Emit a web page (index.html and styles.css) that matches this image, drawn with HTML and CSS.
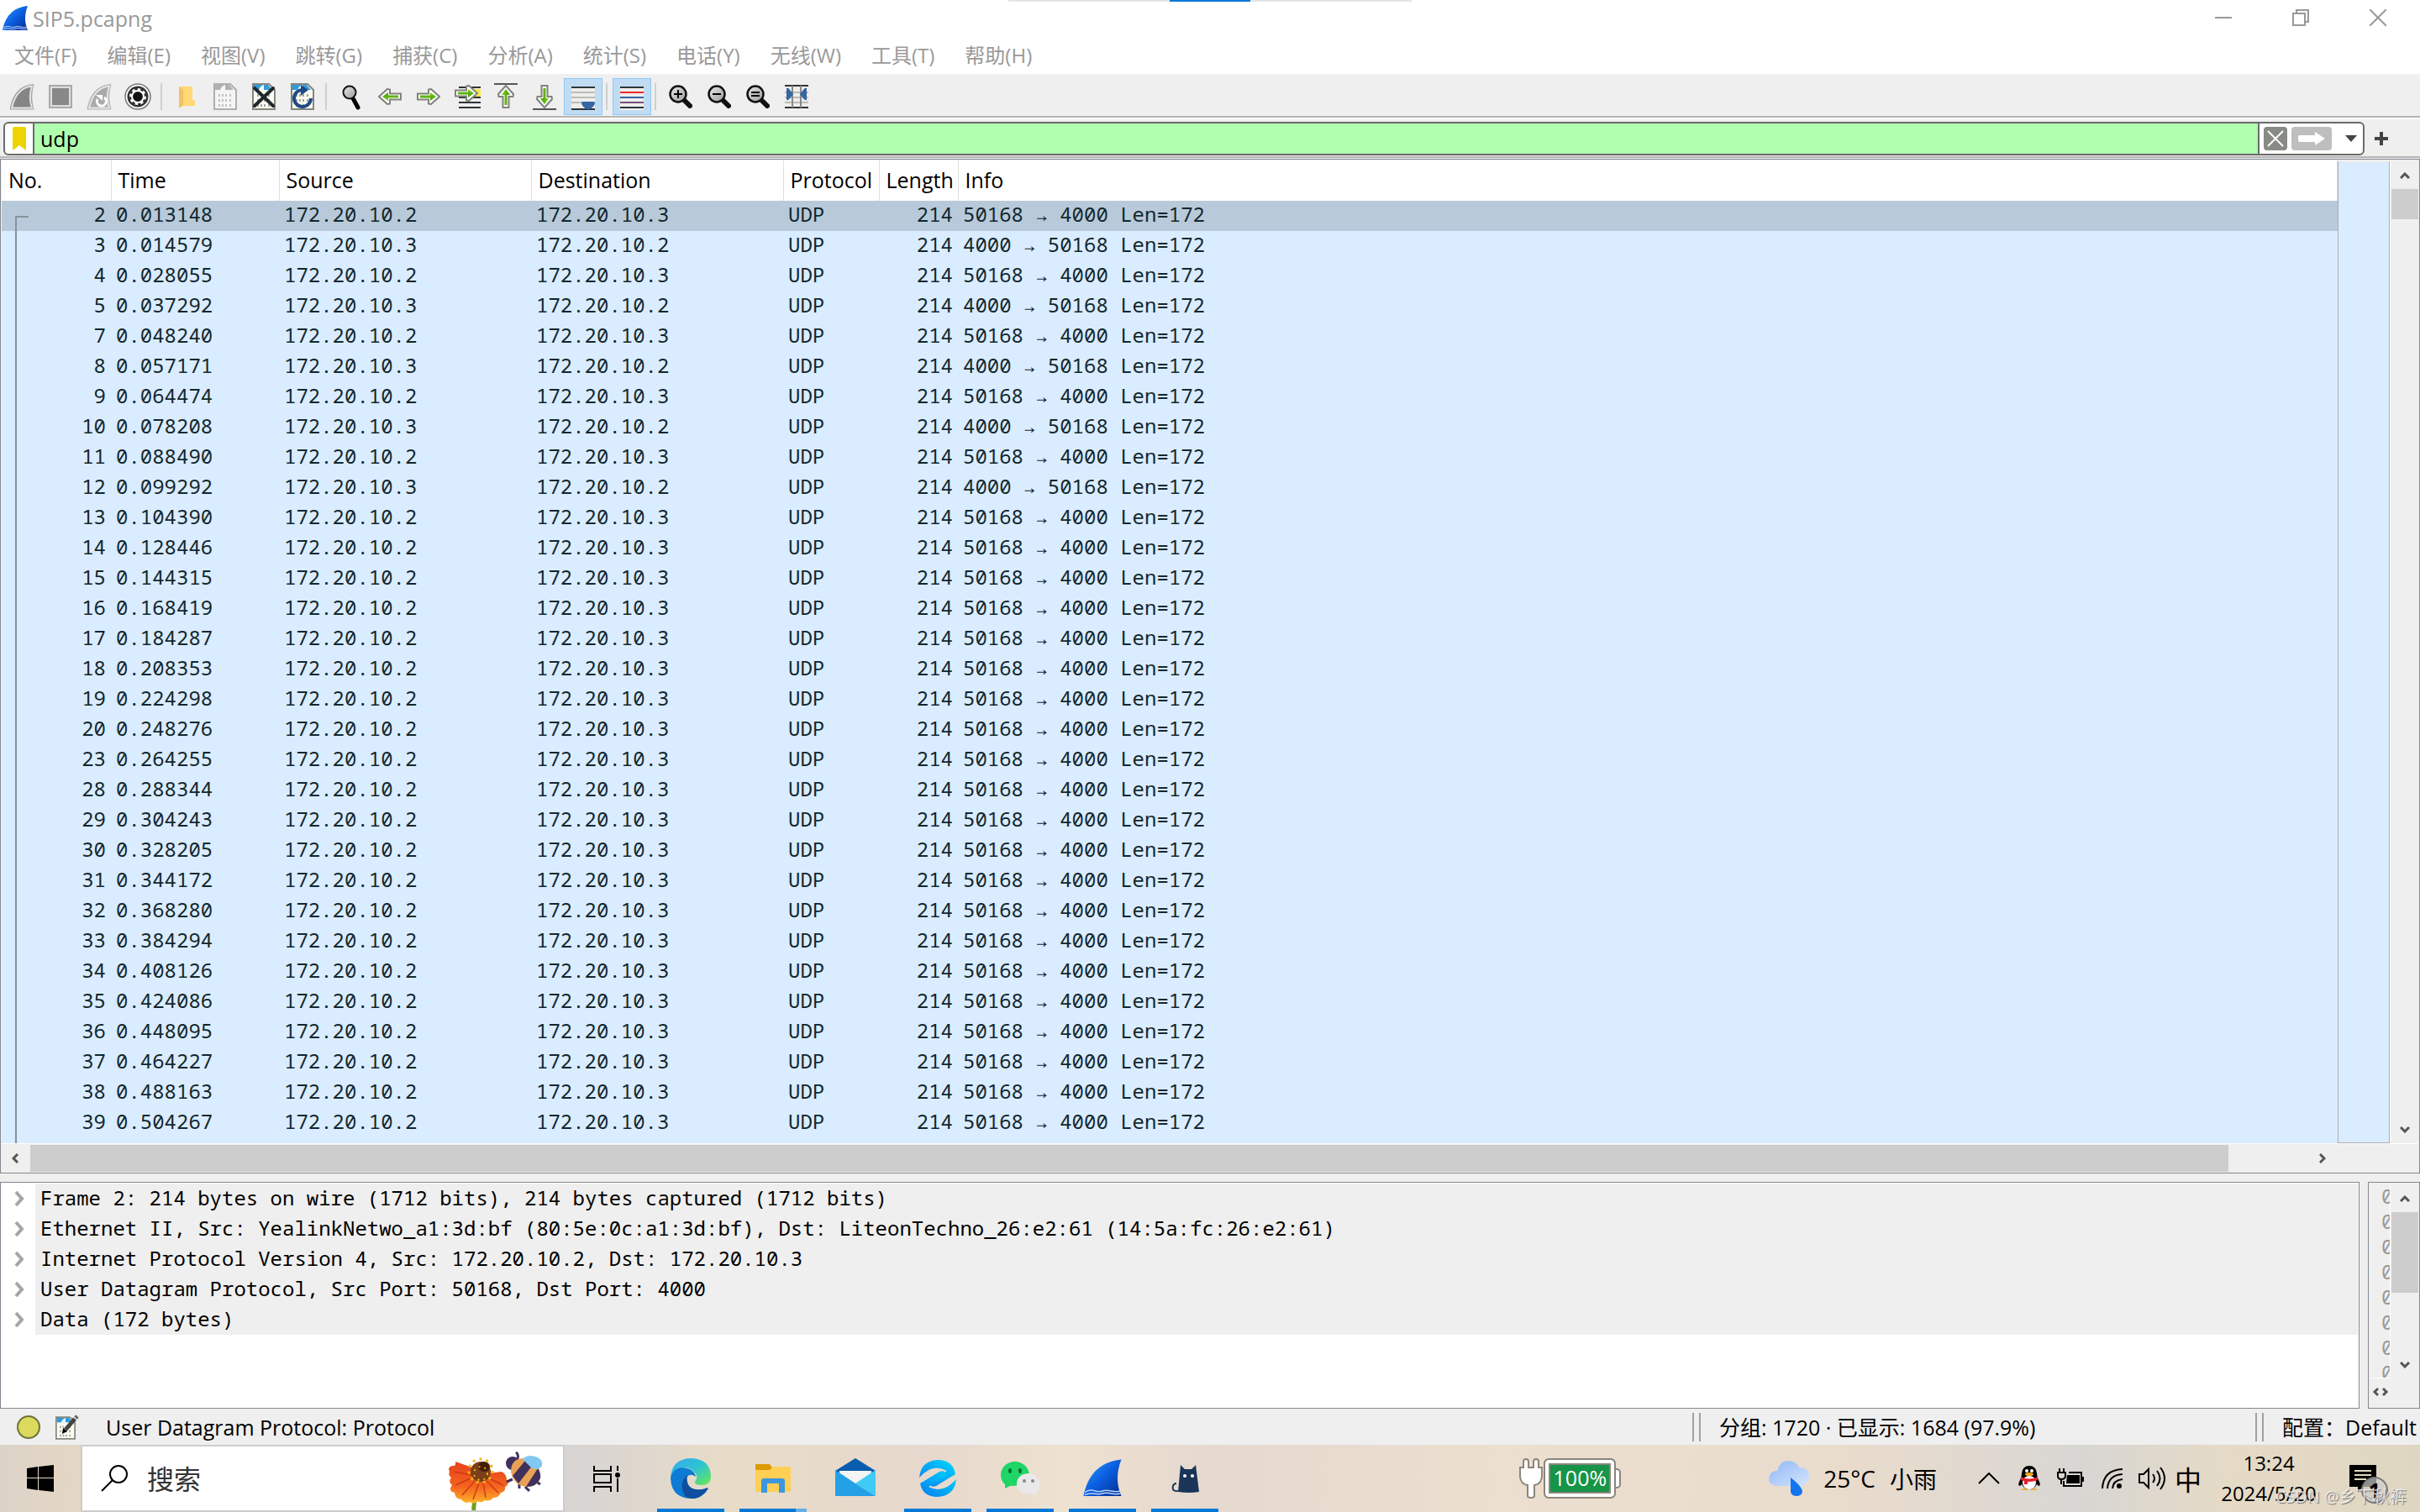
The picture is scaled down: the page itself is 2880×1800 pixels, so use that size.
FILE: index.html
```
<!DOCTYPE html>
<html lang="zh-CN">
<head>
  <meta charset="UTF-8">
  <title>SIP5.pcapng</title>
  <link rel="stylesheet" href="styles.css">
</head>
<body>
  <svg width="0" height="0" class="defs">
    <defs>
      <linearGradient id="blueFin" x1="0" y1="0" x2="1" y2="1">
        <stop offset="0" stop-color="#2f9bff"/><stop offset=".5" stop-color="#0a5fe0"/><stop offset="1" stop-color="#062b8c"/>
      </linearGradient>
      <linearGradient id="green" x1="0" y1="0" x2="0" y2="1">
        <stop offset="0" stop-color="#7fd01c"/><stop offset="1" stop-color="#3f9a06"/>
      </linearGradient>
      <linearGradient id="edgeTop" x1="0" y1="0" x2="1" y2="1">
        <stop offset="0" stop-color="#3aa8f0"/><stop offset=".5" stop-color="#2cc4d2"/><stop offset="1" stop-color="#6bea4e"/>
      </linearGradient>
      <linearGradient id="eBlue" x1="0" y1="1" x2="1" y2="0">
        <stop offset="0" stop-color="#0a7cf0"/><stop offset="1" stop-color="#00d8ff"/>
      </linearGradient>
      <linearGradient id="cloud" x1="0" y1="0" x2="1" y2="1">
        <stop offset="0" stop-color="#8fb6f5"/><stop offset="1" stop-color="#d5e5fd"/>
      </linearGradient>
      <linearGradient id="petal" x1="0" y1="0" x2="0" y2="1">
        <stop offset="0" stop-color="#e8401c"/><stop offset=".6" stop-color="#f4641f"/><stop offset="1" stop-color="#fdb52a"/>
      </linearGradient>
      <linearGradient id="lens" x1="0" y1="0" x2="1" y2="1">
        <stop offset="0" stop-color="#e8e8e8"/><stop offset="1" stop-color="#9a9a9a"/>
      </linearGradient>
      <symbol id="fin" viewBox="0 0 32 32">
        <path d="M1 30C4 15 12 3 31 1 27 11 27 21 31 30Z" fill="url(#blueFin)"/>
        <path d="M2 27c6-4 9 1 14-1s9 2 14 0M2 29c6-3 9 1 14-1s9 2 14 0" fill="none" stroke="#b9d4ff" stroke-width="1"/>
      </symbol>
      <symbol id="doc" viewBox="0 0 28 32">
        <path d="M1 1h19l7 7v23H1Z" fill="#fbfbf0" stroke="#85857f" stroke-width="2"/>
        <path d="M2 2h17l5 6H2Z" fill="#2f9cdc"/><path d="M8 8q2-5 6-6v6Z" fill="#fff"/>
        <path d="M7 13v4M11 13v4M15 13v4M20 13v4M7 19v4M11 19v4M15 19v4M20 19v4M7 25v4M11 25v4M15 25v4M20 25v4" stroke="#a5a5a0" stroke-width="2" stroke-dasharray="3 1"/>
      </symbol>
      <symbol id="arrow" viewBox="0 0 28 20">
        <path d="M1 6.500h13V1.500l3-.5 10 9-10 9-3-.5V13.500H1Z" fill="#fff" stroke="#80837b" stroke-width="2"/>
        <path d="M4 8.500h12V5l7 5-7 5v-3.500H4Z" fill="url(#green)"/>
      </symbol>
      <symbol id="glass" viewBox="0 0 28 28">
        <path d="M17 17l8 8" stroke="#111" stroke-width="6" stroke-linecap="round"/>
        <circle cx="11" cy="11" r="9.500" fill="url(#lens)" stroke="#111" stroke-width="2.500"/>
      </symbol>
    </defs>
  </svg>

  <header class="top">
    <div class="topStrip"><i></i></div>
    <div class="titleBar">
      <svg class="appIcon"><use href="#fin"/></svg>
      <span class="title">SIP5.pcapng</span>
      <div class="winButtons">
        <button aria-label="Minimize"><svg viewBox="0 0 20 20"><path d="M0 10h20"/></svg></button>
        <button aria-label="Restore"><svg viewBox="0 0 20 20"><path d="M1 5h14v14H1ZM5 5V1h14v14h-4"/></svg></button>
        <button aria-label="Close"><svg viewBox="0 0 20 20"><path d="M0 0l20 20M20 0L0 20"/></svg></button>
      </div>
    </div>
    <nav class="menu">
      <button>文件(F)</button>
      <button>编辑(E)</button>
      <button>视图(V)</button>
      <button>跳转(G)</button>
      <button>捕获(C)</button>
      <button>分析(A)</button>
      <button>统计(S)</button>
      <button>电话(Y)</button>
      <button>无线(W)</button>
      <button>工具(T)</button>
      <button>帮助(H)</button>
    </nav>
  </header>

  <div class="toolbar">
    <button aria-label="Start"><svg viewBox="0 0 32 32"><path d="M2 31C5 15 12 3 30 1.500 27 12 27 21 30 31Z" fill="#858585" stroke="#aaa"/><path d="M4 29.500C7 16 14 5 28 3.500 25 13 25 21 28 29.500Z" fill="#858585" stroke="#e4e4e4" stroke-width="2"/></svg></button>
    <button aria-label="Stop"><svg viewBox="0 0 32 32"><path d="M3 3h26v26H3Z" fill="#888" stroke="#aaa" stroke-width="2"/><path d="M5 5h22v22H5Z" fill="#888" stroke="#ddd" stroke-width="2"/></svg></button>
    <button aria-label="Restart"><svg viewBox="0 0 32 32"><path d="M2 31C5 15 12 3 30 1.500 27 12 27 21 30 31Z" fill="#aaa" stroke="#b4b4b4"/><path d="M4 29.500C7 16 14 5 28 3.500 25 13 25 21 28 29.500Z" fill="#aaa" stroke="#e4e4e4" stroke-width="2"/><path d="M14 19a5.500 5.500 0 1 0 8-2" fill="none" stroke="#fff" stroke-width="3"/><path d="M12 14h8v7Z" fill="#fff"/></svg></button>
    <button aria-label="Options"><svg viewBox="0 0 32 32"><circle cx="16" cy="16" r="15" fill="#fff" stroke="#777" stroke-width="1.500"/><circle cx="16" cy="16" r="12.500" fill="#333"/><circle cx="16" cy="16" r="7" fill="#222" stroke="#fff" stroke-width="2"/><circle cx="16" cy="16" r="8.500" fill="none" stroke="#fff" stroke-width="3" stroke-dasharray="3.300 3.300"/><circle cx="16" cy="16" r="5" fill="#111"/></svg></button>
    <span class="sep"></span>
    <button aria-label="Open"><svg viewBox="0 0 32 32"><path d="M7 4h16v16l3 1v6H13l-6 2Z" fill="#ffd873"/><path d="M7 4l5 4v18l-5 4Z" fill="#f2c363"/></svg></button>
    <button aria-label="Save"><svg viewBox="0 0 32 32" class="grayed"><use href="#doc" x="2" width="28" height="32"/></svg></button>
    <button aria-label="Close file"><svg viewBox="0 0 32 32"><use href="#doc" x="2" width="28" height="32"/><path d="M5 6l22 21M27 6L5 27" stroke="#20262b" stroke-width="4" stroke-linecap="round"/></svg></button>
    <button aria-label="Reload"><svg viewBox="0 0 32 32"><use href="#doc" x="2" width="28" height="32"/><path d="M17 8a10 10 0 1 0 9 10" fill="none" stroke="#204a87" stroke-width="4"/><path d="M14 2l9 6-9 7Z" fill="#204a87"/></svg></button>
    <span class="sep"></span>
    <button aria-label="Find"><svg viewBox="0 0 32 32"><path d="M18 18l6 11" stroke="#000" stroke-width="5" stroke-linecap="round"/><circle cx="14" cy="11" r="7.500" fill="url(#lens)" stroke="#111" stroke-width="2"/></svg></button>
    <button aria-label="Back"><svg viewBox="0 0 32 32"><use href="#arrow" x="2" y="6" width="28" height="20" transform="rotate(180 16 16)"/></svg></button>
    <button aria-label="Forward"><svg viewBox="0 0 32 32"><use href="#arrow" x="2" y="6" width="28" height="20"/></svg></button>
    <button aria-label="Go to packet"><svg viewBox="0 0 32 32"><path d="M20 7h12v9H20Z" fill="#fce94f"/><path d="M6 5h26M6 17h26M6 23h26M6 29h26" stroke="#2e3436" stroke-width="2"/><use href="#arrow" x="1" y="2" width="28" height="20"/></svg></button>
    <button aria-label="First packet"><svg viewBox="0 0 32 32"><path d="M2 1h28" stroke="#555" stroke-width="2"/><use href="#arrow" x="2" y="6" width="28" height="20" transform="rotate(-90 16 16)"/></svg></button>
    <button aria-label="Last packet"><svg viewBox="0 0 32 32"><path d="M2 31h28" stroke="#555" stroke-width="2"/><use href="#arrow" x="2" y="6" width="28" height="20" transform="rotate(90 16 16)"/></svg></button>
    <button aria-label="Auto scroll" class="on"><svg viewBox="0 0 32 32"><path d="M2 4h28v28H2Z" fill="#eeeeec"/><path d="M2 5h28M2 31h28" stroke="#2e3436" stroke-width="2"/><path d="M2 11h28M2 17h28M2 23h28" stroke="#babdb6" stroke-width="2"/><path d="M14 24q0-2 2-2h12q2 0 2 2-1 4-6 7h-4q-5-3-6-7Z" fill="#3465a4"/></svg></button>
    <span class="sep"></span>
    <button aria-label="Colorize" class="on"><svg viewBox="0 0 32 32"><path d="M2 4h28v28H2Z" fill="#eeeeec"/><path d="M2 5h28M2 29h28" stroke="#2e3436" stroke-width="2"/><path d="M2 11h28" stroke="#ef2929" stroke-width="2"/><path d="M2 17h28" stroke="#3465a4" stroke-width="2"/><path d="M2 23h28" stroke="#75507b" stroke-width="2"/></svg></button>
    <span class="sep"></span>
    <button aria-label="Zoom in"><svg viewBox="0 0 32 32"><use href="#glass" x="2" y="2" width="28" height="28"/><path d="M8 13h10M13 8v10" stroke="#000" stroke-width="2"/></svg></button>
    <button aria-label="Zoom out"><svg viewBox="0 0 32 32"><use href="#glass" x="2" y="2" width="28" height="28"/><path d="M8 13h10" stroke="#000" stroke-width="2"/></svg></button>
    <button aria-label="Normal size"><svg viewBox="0 0 32 32"><use href="#glass" x="2" y="2" width="28" height="28"/><path d="M8 11h10M8 15h10" stroke="#000" stroke-width="2"/></svg></button>
    <button aria-label="Resize columns"><svg viewBox="0 0 32 32"><path d="M2 4h28v26H2Z" fill="#eeeeec"/><path d="M2 11h28M2 17h28M2 23h28" stroke="#babdb6" stroke-width="2"/><path d="M2 3h28M2 29h28" stroke="#2e3436" stroke-width="2"/><path d="M11 3v26M21 3v26" stroke="#888a85" stroke-width="2"/><path d="M4 6q2-1 4 2l4 5-4 5q-2 3-4 2ZM28 6q-2-1-4 2l-4 5 4 5q2 3 4 2Z" fill="#3465a4"/></svg></button>
  </div>

  <div class="filterBar">
    <div class="filterBox">
      <button class="bookmark" aria-label="Bookmark"><svg viewBox="0 0 16 28"><path d="M0 2q0-2 2-2h12q2 0 2 2v26l-8-6-8 6Z" fill="#edd400"/></svg></button>
      <input type="text" value="udp" aria-label="Display filter">
      <button class="clear" aria-label="Clear"><svg viewBox="0 0 28 28"><path d="M5 5l18 18M23 5L5 23" stroke="#fff" stroke-width="2"/></svg></button>
      <button class="apply" aria-label="Apply"><svg viewBox="0 0 48 28"><path d="M10 10h18V6l12 8-12 8v-4H10q-2 0-2-2v-4q0-2 2-2Z" fill="#fff"/></svg></button>
      <button class="drop" aria-label="History"><svg viewBox="0 0 14 8"><path d="M0 0h14L7 8Z" fill="#444"/></svg></button>
    </div>
    <button class="add" aria-label="Add"><svg viewBox="0 0 16 16"><path d="M8 0v16M0 8h16" stroke="#444" stroke-width="4"/></svg></button>
  </div>

  <section class="packets">
    <div class="listArea">
      <div class="list">
        <table id="packetTable">
          <colgroup>
            <col class="cNo"><col class="cTime"><col class="cAddr"><col class="cAddr"><col class="cProto"><col class="cLen"><col>
          </colgroup>
          <thead>
            <tr><th>No.</th><th>Time</th><th>Source</th><th>Destination</th><th>Protocol</th><th>Length</th><th>Info</th></tr>
          </thead>
          <tbody></tbody>
        </table>
        <span class="stream"></span>
      </div>
      <div class="minimap"></div>
      <div class="vbar">
        <svg viewBox="0 0 12 8"><path d="M1 7l5-5 5 5"/></svg>
        <div class="thumb"></div>
        <svg viewBox="0 0 12 8"><path d="M1 1l5 5 5-5"/></svg>
      </div>
    </div>
    <div class="hbar">
      <svg viewBox="0 0 8 12"><path d="M7 1L2 6l5 5"/></svg>
      <div class="track"><div class="thumb"></div></div>
      <svg viewBox="0 0 8 12"><path d="M1 1l5 5-5 5"/></svg>
    </div>
  </section>

  <div class="lower">
    <section class="details">
      <ul>
        <li><svg viewBox="0 0 12 20"><path d="M2 2l7 8-7 8"/></svg><span>Frame 2: 214 bytes on wire (1712 bits), 214 bytes captured (1712 bits)</span></li>
        <li><svg viewBox="0 0 12 20"><path d="M2 2l7 8-7 8"/></svg><span>Ethernet II, Src: YealinkNetwo_a1:3d:bf (80:5e:0c:a1:3d:bf), Dst: LiteonTechno_26:e2:61 (14:5a:fc:26:e2:61)</span></li>
        <li><svg viewBox="0 0 12 20"><path d="M2 2l7 8-7 8"/></svg><span>Internet Protocol Version 4, Src: 172.20.10.2, Dst: 172.20.10.3</span></li>
        <li><svg viewBox="0 0 12 20"><path d="M2 2l7 8-7 8"/></svg><span>User Datagram Protocol, Src Port: 50168, Dst Port: 4000</span></li>
        <li><svg viewBox="0 0 12 20"><path d="M2 2l7 8-7 8"/></svg><span>Data (172 bytes)</span></li>
      </ul>
    </section>
    <section class="bytes">
      <div class="bytesMain">
        <div class="hex">0<br>0<br>0<br>0<br>0<br>0<br>0<br>0</div>
        <div class="vbar">
          <svg viewBox="0 0 12 8"><path d="M1 7l5-5 5 5"/></svg>
          <div class="thumb"></div>
          <svg viewBox="0 0 12 8"><path d="M1 1l5 5 5-5"/></svg>
        </div>
      </div>
      <div class="miniBar">
        <svg viewBox="0 0 8 12"><path d="M7 2L3 6l4 4"/></svg>
        <svg viewBox="0 0 8 12"><path d="M1 2l4 4-4 4"/></svg>
      </div>
    </section>
  </div>

  <footer class="status">
    <span class="expert"></span>
    <svg class="note" viewBox="0 0 28 30"><use href="#doc" y="2" width="24" height="28"/><path d="M12 18L23 5" stroke="#444" stroke-width="5"/><path d="M24 4l2-2" stroke="#666" stroke-width="5"/><path d="M9 16l5 4-6 3Z" fill="#000"/></svg>
    <span class="field">User Datagram Protocol: Protocol</span>
    <span class="count">分组: 1720 · 已显示: 1684 (97.9%)</span>
    <span class="profile">配置：Default</span>
  </footer>

  <div class="taskbar">
    <button class="start" aria-label="Start menu"><svg viewBox="0 0 32 32"><path d="M0 4l13-2v13H0ZM14 2l18-2v15H14ZM0 16h13v14L0 28ZM14 16h18v16l-18-2Z"/></svg></button>
    <label class="search">
      <svg viewBox="0 0 32 32"><circle cx="21" cy="11" r="10"/><path d="M14 18L1 31"/></svg>
      <input type="text" placeholder="搜索">
      <svg class="flower" viewBox="0 0 116 70">
        <path d="M33 54q-4 8-3 16" stroke="#6f9f20" stroke-width="5" fill="none"/>
        <path d="M28 19L8 12Q9 18 5 17-2 18 1 24-1 29 3 31-1 36 4 40-1 47 7 49q1 8 8 8 5 6 10 3 6 4 9-1 5 3 9-1 6 2 10-3 7 0 9-6 6-1 5-7 6-3 2-8 0-7-6-10L46 26Z" fill="url(#petal)"/>
        <path d="M28 28L6 24M28 31L8 40M31 35L16 52M36 37l-7 20M41 37l3 18M45 35l14 14M48 32l17 8" stroke="#cf3a18" stroke-width="1.500"/>
        <circle cx="38" cy="24" r="12" fill="#7a4018"/><ellipse cx="42" cy="18" rx="7" ry="6" fill="#431c09"/>
        <circle cx="38" cy="23" r="14" fill="none" stroke="#f2b21a" stroke-width="3" stroke-dasharray="3 5"/>
        <circle cx="38" cy="26" r="8" fill="none" stroke="#f2b21a" stroke-width="2" stroke-dasharray="2 5"/>
        <path d="M80 13Q85 4 80 1M76 33l-7 3M84 38l0 6M91 42l5 5M104 36l5 3" stroke="#40305c" stroke-width="3" fill="none"/>
        <circle cx="76" cy="14" r="8" fill="#40305c"/>
        <path d="M74 24Q74 8 90 8q18 4 19 20-2 15-17 14-15-2-18-18Z" fill="#e8a155"/>
        <path d="M76 29L91 11l9 5-17 22ZM92 42L106 20q4 6 3 12-4 10-17 10Z" fill="#40305c"/>
        <path d="M88 9q6-6 15-3 10 3 8 11-4 6-12 3Z" fill="#82c8f5"/>
      </svg>
    </label>
    <div class="apps">
      <button class="view" aria-label="Task view"><svg viewBox="0 0 48 48"><path d="M9 9v6h20V9M9 40v-6h20v6M9 19h20v10H9ZM37 9v6M37 24v16" fill="none" stroke="#000" stroke-width="2"/><circle cx="37" cy="20" r="3"/></svg></button>
      <button class="run" aria-label="Edge"><svg viewBox="0 0 48 48"><path d="M0 24Q1 1 24 0q24 1 24 22 0 10-11 10-9 0-8-4 5-6-1-12-8-8-20-3-6 3-8 11Z" fill="url(#edgeTop)"/><path d="M0 24Q2 12 14 11q14 1 16 11-7-5-11 1-4 13 7 17 9 2 19-4Q38 48 24 48 1 47 0 24Z" fill="#0c7bd4"/><path d="M18 46Q8 30 20 20q-2 12 6 16 9 3 18-1 1 1 0 2-8 12-20 11Z" fill="#0f4f9e"/></svg></button>
      <button class="run multi" aria-label="Explorer"><svg viewBox="0 0 48 48"><path d="M3 7h17l3 4v6H3Z" fill="#dc9a06"/><path d="M3 14h17l4-4h19q2 0 2 2v26q0 2-2 2H5q-2 0-2-2Z" fill="#ffcf55"/><path d="M10 27q0-3 3-3h22q3 0 3 3v14h-7V30H17v11h-7Z" fill="#3d97dd"/></svg></button>
      <button aria-label="Mail"><svg viewBox="0 0 48 48"><path d="M0 15L24 0l24 15v4H0Z" fill="#0a5cad"/><path d="M5 15h38v8L24 30 5 22Z" fill="#f4f4f4"/><path d="M0 14l24 16 24 15H0Z" fill="#24a0e6"/><path d="M48 14L24 30l24 15Z" fill="#3fcbf5"/></svg></button>
      <button class="run" aria-label="Browser"><svg viewBox="0 0 48 48"><path d="M2 23Q4 3 24 2q18 0 21 17L22 33q-5 2-7-1-3-5 6-9l14-8Q18 5 2 23Z" fill="url(#eBlue)"/><path d="M46 25Q44 45 24 46 6 46 3 30l23-14q5-2 7 1 3 5-6 9l-14 8q17 9 33-9Z" fill="url(#eBlue)"/></svg></button>
      <button class="run" aria-label="WeChat"><svg viewBox="0 0 48 48"><path d="M18 4C7 4 1 12 1 20q0 7 5 11v5l6-3q23 0 23-13C35 12 28 4 18 4Z" fill="#1fd566"/><ellipse cx="12" cy="15" rx="2" ry="3" fill="#0a6b32"/><ellipse cx="24" cy="15" rx="2" ry="3" fill="#0a6b32"/><path d="M34 18c-8 0-14 5-14 13s8 13 17 11l7 2-1-4C53 32 46 18 34 18Z" fill="#e9e9e9"/><circle cx="29" cy="27" r="2" fill="#888"/><circle cx="39" cy="27" r="2" fill="#888"/></svg></button>
      <button class="run" aria-label="Wireshark"><svg viewBox="0 0 48 48"><use href="#fin" width="48" height="48"/></svg></button>
      <button class="run" aria-label="Cat"><svg viewBox="0 0 48 48"><path d="M16 40L19 8l5 5h8l5-5 4 32q-12 2-25 0Z" fill="#1b3558"/><path d="M17 39Q8 40 10 33q1-3 4-3" fill="none" stroke="#1b3558" stroke-width="2"/><circle cx="24" cy="21" r="2" fill="#fff"/><circle cx="33" cy="21" r="2" fill="#fff"/></svg></button>
    </div>
    <div class="power">
      <svg viewBox="0 0 30 48"><path d="M6 11V4q0-3 3-3t3 3v7h6V4q0-3 3-3t3 3v7h4v11q-1 9-9 10v13q0 2-4 2t-4-2V32q-8-1-9-10V11Z" fill="#fff" stroke="#8c857c" stroke-width="2"/></svg>
      <span>100%</span><i></i>
    </div>
    <div class="weather">
      <svg viewBox="0 0 48 42"><path d="M9 30Q0 29 0 21q1-9 10-9Q13 0 23 0t13 8q12 0 12 11-1 11-11 11Z" fill="url(#cloud)"/><path d="M26 20q14 11 14 17-1 5-7 5t-7-5Z" fill="#1274ee"/></svg>
      <span>25°C</span><span>小雨</span>
    </div>
    <div class="tray">
      <svg class="up" viewBox="0 0 26 14"><path d="M1 13L13 1l12 12" fill="none" stroke="#000" stroke-width="2"/></svg>
      <svg class="qq" viewBox="0 0 26 30"><path d="M13 0Q5 0 4 9 4 13 1 19q-2 5 1 5l2-2q3 6 9 6t9-6l2 2q3 0 1-5-3-6-3-10Q21 0 13 0Z"/><ellipse cx="13" cy="20" rx="8" ry="8" fill="#fff"/><path d="M3 13q10 5 20 0v4q-10 4-20 0Z" fill="#e3212c"/><path d="M7 16h4v6H7Z" fill="#e3212c"/><ellipse cx="13" cy="10" rx="5" ry="2" fill="#f5a81c"/><circle cx="10" cy="6" r="2" fill="#fff"/><circle cx="16" cy="6" r="2" fill="#fff"/><path d="M3 29q4-4 9 0ZM14 29q5-4 9 0Z" fill="#f5a81c"/></svg>
      <svg class="bat" viewBox="0 0 32 24"><path d="M3 0v5M8 0v5M1 5h9v4q0 4-5 4-4 0-4-4ZM5 13v6M14 5h15v16H8v-6M31 10v6" fill="none" stroke="#000" stroke-width="2"/><path d="M12 8h15v10H11Z"/></svg>
      <svg class="wifi" viewBox="0 0 26 26"><path d="M1 25Q2 3 25 2M7 25Q8 9 25 8M13 25q1-10 12-11" fill="none" stroke="#000" stroke-width="2"/><circle cx="21" cy="22" r="3"/></svg>
      <svg class="vol" viewBox="0 0 32 28"><path d="M1 9h5l6-6v22l-6-6H1ZM17 9q4 5 0 10M22 5q7 9 0 18M26 1q10 13 0 26" fill="none" stroke="#000" stroke-width="2"/></svg>
      <span class="ime">中</span>
      <div class="clock"><span>13:24</span><span>2024/5/20</span></div>
      <div class="notify">
        <svg viewBox="0 0 32 32"><path d="M0 0h32v26H16l-6 6v-6H0Z"/><path d="M6 7h20M6 12h20M6 17h14" stroke="#e3d9c4" stroke-width="2"/></svg>
        <b>1</b>
      </div>
    </div>
    <span class="watermark">CSDN @乡下秋裤</span>
  </div>

  <script>
    // No., Time, direction (0 = .2 -> .3, 1 = .3 -> .2)
    const packets = [
      [2, "0.013148", 0], [3, "0.014579", 1], [4, "0.028055", 0], [5, "0.037292", 1],
      [7, "0.048240", 0], [8, "0.057171", 1], [9, "0.064474", 0], [10, "0.078208", 1],
      [11, "0.088490", 0], [12, "0.099292", 1], [13, "0.104390", 0], [14, "0.128446", 0],
      [15, "0.144315", 0], [16, "0.168419", 0], [17, "0.184287", 0], [18, "0.208353", 0],
      [19, "0.224298", 0], [20, "0.248276", 0], [23, "0.264255", 0], [28, "0.288344", 0],
      [29, "0.304243", 0], [30, "0.328205", 0], [31, "0.344172", 0], [32, "0.368280", 0],
      [33, "0.384294", 0], [34, "0.408126", 0], [35, "0.424086", 0], [36, "0.448095", 0],
      [37, "0.464227", 0], [38, "0.488163", 0], [39, "0.504267", 0]
    ];

    const tbody = document.querySelector("#packetTable tbody");
    packets.forEach(([no, time, back], i) => {
      const row = document.createElement("tr");
      if (i === 0) row.className = "selected";
      row.innerHTML = `
        <td class="num">${no}</td>
        <td>${time}</td>
        <td>172.20.10.${back ? 3 : 2}</td>
        <td>172.20.10.${back ? 2 : 3}</td>
        <td>UDP</td>
        <td class="num">214</td>
        <td>${back ? "4000 → 50168" : "50168 → 4000"} Len=172</td>
      `;
      tbody.appendChild(row);
    });
  </script>
</body>
</html>
```
FILE: styles.css
```
* {
  box-sizing: border-box;
}
body {
  margin: 0;
  height: 100vh;
  display: flex;
  flex-direction: column;
  overflow: hidden;
  background: #efefef;
  color: #000;
  font-family: "Open Sans", "Noto Sans CJK SC", sans-serif;
  font-size: 25px;
}
button {
  border: none;
  background: none;
  padding: 0;
  font: inherit;
  color: inherit;
  display: flex;
  align-items: center;
  justify-content: center;
}
svg {
  display: block;
  flex: none;
}
.defs {
  position: absolute;
}

/* title and menus */
.top {
  flex: none;
  height: 90px;
  background: #fff;
  border-bottom: 2px solid #f0f0f0;
  position: relative;
}
.topStrip {
  position: absolute;
  top: 0;
  left: 50%;
  width: 480px;
  margin-left: -240px;
  height: 2px;
  background: #e5e5e5;
  display: flex;
  justify-content: center;
}
.topStrip i {
  width: 96px;
  background: #0078d7;
}
.titleBar {
  height: 44px;
  display: flex;
  align-items: center;
  padding: 0 4px 0 2px;
  color: #999;
}
.appIcon {
  width: 32px;
  height: 32px;
}
.title {
  flex: 1;
  padding-left: 5px;
}
.winButtons {
  display: flex;
  align-self: flex-start;
}
.winButtons button {
  width: 92px;
  height: 42px;
}
.winButtons svg {
  width: 20px;
  height: 20px;
  fill: none;
  stroke: #999;
  stroke-width: 2;
}
.menu {
  display: flex;
  gap: 36px;
  padding-left: 17px;
  height: 40px;
  font-size: 24px;
  color: #999;
}

/* main toolbar */
.toolbar {
  flex: none;
  height: 50px;
  display: flex;
  align-items: center;
  padding: 2px 0 0 3px;
  border-bottom: 2px solid #b5b5b5;
}
.toolbar button {
  width: 46px;
  height: 44px;
}
.toolbar svg {
  width: 32px;
  height: 32px;
}
.toolbar .on {
  background: #c0dcf3;
  border: 1px solid #90c8f6;
}
.toolbar .grayed {
  filter: grayscale(1);
  opacity: 0.6;
}
.sep {
  width: 12px;
  height: 32px;
  border-left: 4px solid transparent;
  background: linear-gradient(90deg, #cfcfcf 2px, transparent 2px) padding-box;
}

/* display filter */
.filterBar {
  flex: none;
  height: 48px;
  border-top: 2px solid #fff;
  border-bottom: 2px solid #b5b5b5;
  padding: 3px 0 1px 4px;
  display: flex;
}
.filterBox {
  flex: 1;
  height: 40px;
  background: #fff;
  border: 2px solid #6b6b6b;
  border-radius: 6px;
  display: flex;
  align-items: center;
  overflow: hidden;
}
.bookmark {
  width: 33px;
  height: 100%;
}
.bookmark svg {
  width: 16px;
  height: 28px;
}
.filterBox input {
  flex: 1;
  height: 100%;
  border: solid #6b6b6b;
  border-width: 0 2px;
  background: #afffaf;
  padding: 0 0 0 7px;
  font: inherit;
  outline: none;
}
.clear, .apply {
  height: 28px;
  border-radius: 4px;
  background: #888a85;
  margin-left: 5px;
}
.clear {
  width: 28px;
}
.apply {
  width: 48px;
  background: #bebebe;
}
.drop {
  width: 37px;
  padding-left: 8px;
}
.drop svg {
  width: 14px;
  height: 8px;
}
.add {
  width: 66px;
  padding-right: 26px;
}
.add svg {
  width: 16px;
  height: 16px;
}

/* packet list */
.packets {
  flex: 1;
  min-height: 0;
  margin-top: 1px;
  border: 1px solid #828790;
  padding: 1px;
  display: flex;
  flex-direction: column;
}
.listArea {
  flex: 1;
  min-height: 0;
  display: flex;
}
.list {
  flex: 1;
  position: relative;
  overflow: hidden;
  background: #daecff;
}
table {
  width: 100%;
  table-layout: fixed;
  border-collapse: collapse;
}
.cNo {
  width: 130px;
}
.cTime {
  width: 200px;
}
.cAddr {
  width: 300px;
}
.cProto {
  width: 114px;
}
.cLen {
  width: 94px;
}
th {
  height: 48px;
  background: #fff;
  border-right: 1px solid #e0e0e0;
  padding: 0 0 2px 8px;
  text-align: left;
  font-weight: normal;
}
td {
  height: 36px;
  padding: 0 6px 4px;
  line-height: 32px;
  font-family: "Noto Sans Mono", "DejaVu Sans Mono", monospace;
  font-size: 24px;
  color: #12272e;
  white-space: nowrap;
}
.num {
  text-align: right;
}
.selected {
  background: #b8cad9;
}
.stream {
  position: absolute;
  top: 66px;
  left: 16px;
  bottom: 0;
  width: 16px;
  border: solid #87929b;
  border-width: 2px 0 0 2px;
}
.minimap {
  width: 62px;
  background: #daecff;
  border: 1px solid #adadad;
  border-top: 2px solid #efefef;
}
.vbar {
  width: 34px;
  padding: 14px 1px 12px;
  display: flex;
  flex-direction: column;
  align-items: center;
  border-left: 1px solid #fff;
}
.vbar svg, .hbar svg {
  width: 12px;
  height: 8px;
  fill: none;
  stroke: #555;
  stroke-width: 3;
}
.vbar .thumb {
  width: 32px;
  height: 36px;
  margin: 12px 0 auto;
  background: #cdcdcd;
}
.hbar {
  flex: none;
  height: 34px;
  display: flex;
  align-items: center;
  border-top: 1px solid #fff;
  padding: 0 110px 0 12px;
}
.hbar svg {
  width: 8px;
  height: 12px;
}
.hbar .track {
  flex: 1;
  height: 32px;
  padding-right: 96px;
  margin: 0 12px 0 14px;
}
.hbar .thumb {
  height: 32px;
  background: #cdcdcd;
}

/* packet details and bytes */
.lower {
  flex: none;
  height: 270px;
  margin-top: 10px;
  display: flex;
  gap: 10px;
}
.details {
  flex: 1;
  background: #fff;
  border: 1px solid #828790;
  padding: 1px;
}
.details ul {
  list-style: none;
  margin: 0;
  padding: 0;
}
.details li {
  height: 36px;
  display: flex;
  font-family: "Noto Sans Mono", "DejaVu Sans Mono", monospace;
  font-size: 24px;
  line-height: 34px;
}
.details svg {
  width: 12px;
  height: 20px;
  margin: 8px 13px 0 15px;
  fill: none;
  stroke: #a6a6a6;
  stroke-width: 4;
}
.details span {
  flex: 1;
  background: #efefef;
  padding-left: 6px;
}
.bytes {
  width: 62px;
  border: 1px solid #828790;
  padding: 1px;
  display: flex;
  flex-direction: column;
}
.bytesMain {
  height: 232px;
  display: flex;
}
.hex {
  width: 25px;
  padding-left: 14px;
  overflow: hidden;
  font-family: "Noto Sans Mono", "DejaVu Sans Mono", monospace;
  font-size: 24px;
  line-height: 30px;
  color: #999;
  border-bottom: 1px solid #fff;
}
.bytes .thumb {
  height: 96px;
}
.miniBar {
  display: flex;
  gap: 4px;
  padding: 10px 3px;
}
.miniBar svg {
  width: 8px;
  height: 12px;
  fill: none;
  stroke: #555;
  stroke-width: 3;
}

/* status bar */
.status {
  flex: none;
  height: 43px;
  display: flex;
  align-items: center;
  padding-left: 20px;
}
.expert {
  width: 28px;
  height: 28px;
  border: 2px solid #6f7136;
  border-radius: 50%;
  background: #dbd95e;
}
.note {
  width: 28px;
  height: 30px;
  margin-left: 18px;
}
.field {
  flex: 1;
  padding-left: 32px;
}
.count, .profile {
  height: 34px;
  line-height: 34px;
  border-left: 2px solid #a0a0a0;
  padding-left: 30px;
  position: relative;
  white-space: nowrap;
}
.count::before, .profile::before {
  content: "";
  position: absolute;
  left: 6px;
  top: 0;
  width: 2px;
  height: 34px;
  background: #a0a0a0;
}
.count {
  width: 670px;
}
.profile {
  width: 196px;
}

/* windows taskbar */
.taskbar {
  flex: none;
  height: 80px;
  display: flex;
  align-items: center;
  position: relative;
  background: linear-gradient(90deg, #dcd3c8, #e4d6c4 3%, #d8d4d2 24%, #e8dcc8 30%, #e6d8cc 38%, #eee1d0 44%, #e5d9cf 50%, #ecdfcf 62%, #eadccc 76%, #d8d6d3 86%, #e5dac6 92%, #dfd6c2);
}
.start {
  width: 96px;
}
.start svg {
  width: 32px;
  height: 32px;
}
.search {
  width: 576px;
  height: 80px;
  background: #fff;
  border: 2px solid #ccc;
  display: flex;
  align-items: center;
  padding-left: 22px;
}
.search svg {
  width: 32px;
  height: 32px;
  fill: none;
  stroke: #000;
  stroke-width: 2;
}
.search input {
  flex: 1;
  min-width: 0;
  border: none;
  outline: none;
  padding: 0 0 0 23px;
  font: inherit;
  font-size: 32px;
}
.search input::placeholder {
  color: #333;
}
.search .flower {
  width: 116px;
  height: 70px;
  margin: 6px 20px 0 0;
  stroke: none;
}
.apps {
  display: flex;
  gap: 18px;
  margin-left: 8px;
  height: 80px;
}
.apps button {
  width: 80px;
  border-top: 4px solid transparent;
  border-bottom: 4px solid transparent;
}
.apps .view {
  width: 84px;
}
.apps svg {
  width: 48px;
  height: 48px;
}
.apps .run {
  border-bottom-color: #0078d7;
}
.apps .multi {
  border-image: linear-gradient(90deg, #0078d7 80%, #67ade8 80%) 4;
  border-width: 0 0 4px;
  padding-top: 4px;
}
.power {
  display: flex;
  align-items: center;
  margin-left: auto;
}
.power svg {
  width: 30px;
  height: 48px;
}
.power span {
  width: 86px;
  height: 48px;
  border: 2px solid #8c857c;
  border-radius: 6px;
  background: #169447;
  box-shadow: inset 0 0 0 4px #fff, inset 0 0 0 6px #8c857c;
  color: #fff;
  line-height: 42px;
  text-align: center;
}
.power i {
  width: 6px;
  height: 24px;
  background: #fff;
  border: 2px solid #8c857c;
  border-left: none;
  border-radius: 0 5px 5px 0;
}
.weather {
  display: flex;
  align-items: center;
  gap: 17px;
  margin-left: 176px;
  font-size: 28px;
}
.weather svg {
  width: 48px;
  height: 42px;
}
.tray {
  display: flex;
  align-items: center;
  margin-left: 49px;
  width: 526px;
}
.up {
  width: 26px;
  height: 14px;
}
.qq {
  width: 26px;
  height: 30px;
  margin-left: 22px;
}
.bat {
  width: 32px;
  height: 24px;
  margin-left: 20px;
}
.wifi {
  width: 26px;
  height: 26px;
  margin-left: 21px;
}
.vol {
  width: 32px;
  height: 28px;
  margin-left: 18px;
}
.ime {
  margin-left: 11px;
  font-size: 32px;
}
.clock {
  width: 120px;
  margin-left: 20px;
  display: flex;
  flex-direction: column;
  align-items: center;
  font-size: 24px;
  line-height: 36px;
}
.notify {
  position: relative;
  margin-left: 36px;
}
.notify svg {
  width: 32px;
  height: 32px;
}
.notify b {
  position: absolute;
  left: 14px;
  top: 14px;
  width: 32px;
  height: 32px;
  border: 2px solid #777;
  border-radius: 50%;
  background: rgba(205, 205, 205, 0.7);
  text-align: center;
  line-height: 28px;
}
.watermark {
  position: absolute;
  right: 16px;
  bottom: 2px;
  font-size: 20px;
  line-height: 32px;
  color: rgba(255, 255, 255, 0.7);
  text-shadow: 1px 1px 1px #777;
}
```
